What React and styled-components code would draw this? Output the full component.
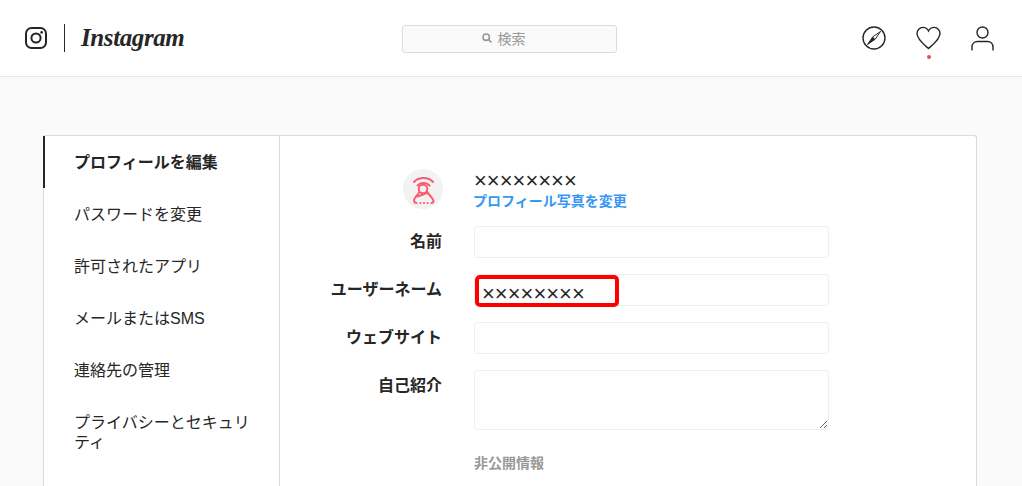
import React from 'react'
import styled, { createGlobalStyle } from 'styled-components'

const Global = createGlobalStyle`
  html, body {
    margin: 0;
    height: 100%;
    overflow: hidden;
    background: #fafafa;
    color: #262626;
    font-family: "Liberation Sans", "Noto Sans CJK JP", sans-serif;
  }
  * { box-sizing: border-box; }
`

const Header = styled.header`
  display: grid;
  grid-template-columns: 1fr 215px 1fr;
  align-items: center;
  height: 77px;
  padding: 0 28px 0 25px;
  background: #fff;
  border-bottom: 1px solid #e6e6e6;
`

const Brand = styled.div`
  display: flex;
  align-items: center;
`

const Divider = styled.span`
  width: 1px;
  height: 28px;
  margin: 0 16px 0 17px;
  background: #262626;
`

const Wordmark = styled.span`
  font-family: "Liberation Serif", serif;
  font-style: italic;
  font-weight: 700;
  font-size: 25px;
  letter-spacing: -0.4px;
  color: #262626;
`

const Search = styled.div`
  display: flex;
  align-items: center;
  justify-content: center;
  gap: 6px;
  height: 28px;
  margin-top: 2px;
  padding: 0 12px 2px 0;
  background: #fafafa;
  border: 1px solid #dbdbdb;
  border-radius: 3px;
  color: #999;
  font-size: 14px;
`

const Nav = styled.nav`
  display: flex;
  justify-content: flex-end;
  align-items: center;
  gap: 30px;
`

const NavIcon = styled.span`
  position: relative;
  display: flex;
`

const Dot = styled.span`
  position: absolute;
  left: 50%;
  bottom: -9px;
  width: 4px;
  height: 4px;
  margin-left: -2px;
  border-radius: 50%;
  background: #ed4956;
`

const Card = styled.main`
  display: grid;
  grid-template-columns: 236px 1fr;
  width: 934px;
  height: 351px;
  margin: 58px 0 0 43px;
  background: #fff;
  border: 1px solid #dbdbdb;
  border-bottom: none;
  border-radius: 3px 3px 0 0;
`

const Sidebar = styled.ul`
  margin: 0;
  padding: 0;
  list-style: none;
  border-right: 1px solid #dbdbdb;
`

const SideItem = styled.li`
  padding: 17px 16px 15px 29px;
  margin-left: -1px;
  border-left: 2px solid ${p => (p.$active ? '#262626' : 'transparent')};
  font-size: 16px;
  line-height: 20px;
  font-weight: ${p => (p.$active ? 700 : 400)};
  color: #262626;
`

const Form = styled.section`
  padding: 33px 0 0;
`

const Row = styled.div`
  display: grid;
  grid-template-columns: 162px 355px;
  column-gap: 32px;
  margin-bottom: 16px;
`

const Label = styled.label`
  font-size: 16px;
  font-weight: 700;
  line-height: 32px;
  text-align: right;
  color: #262626;
`

const Avatar = styled.div`
  justify-self: end;
  width: 40px;
  height: 40px;
  margin-right: -1px;
  border-radius: 50%;
  background: #f2f2f2;
`

const NameBlock = styled.div`
  display: flex;
  flex-direction: column;
  padding-top: 2px;
`

const UserName = styled.span`
  font-size: 22px;
  line-height: 20px;
  height: 21px;
  color: #262626;
`

const ChangeLink = styled.a`
  margin-left: -1px;
  font-size: 14px;
  line-height: 18px;
  font-weight: 700;
  color: #3897f0;
`

const FieldWrap = styled.div`
  position: relative;
`

const Input = styled.input`
  display: block;
  width: 100%;
  height: 32px;
  padding: 7px 7px 0;
  background: #fff;
  border: 1px solid #efefef;
  border-radius: 3px;
  outline: none;
  color: #262626;
  font-family: inherit;
  font-size: 22px;
`

const TextArea = styled.textarea`
  display: block;
  width: 100%;
  height: 60px;
  padding: 6px 10px;
  background: #fff;
  border: 1px solid #efefef;
  border-radius: 3px;
  outline: none;
`

const Highlight = styled.span`
  position: absolute;
  left: 1px;
  top: 1px;
  width: 144px;
  height: 32px;
  border: 4px solid #ff0000;
  border-radius: 5px;
  pointer-events: none;
`

const SectionTitle = styled.h2`
  grid-column: 2;
  margin: 8px 0 0;
  font-size: 14px;
  line-height: 18px;
  font-weight: 700;
  color: #999;
`

const stroke = { fill: 'none', stroke: '#262626' }

export default function App() {
  return (
    <>
      <Global />
      <Header>
        <Brand>
          <svg width="22" height="22" viewBox="0 0 22 22">
            <rect x="1" y="1" width="20" height="20" rx="5.5" {...stroke} strokeWidth="2" />
            <circle cx="11" cy="11" r="4.6" {...stroke} strokeWidth="2" />
            <circle cx="16.6" cy="5.4" r="1.3" fill="#262626" />
          </svg>
          <Divider />
          <Wordmark>Instagram</Wordmark>
        </Brand>
        <Search>
          <svg width="10" height="10" viewBox="0 0 10 10">
            <circle cx="4.2" cy="4.2" r="3.2" fill="none" stroke="#999" strokeWidth="1.6" />
            <path d="M6.6 6.6 9.4 9.4" stroke="#999" strokeWidth="1.6" />
          </svg>
          検索
        </Search>
        <Nav>
          <NavIcon>
            <svg width="24" height="24" viewBox="0 0 24 24">
              <circle cx="12" cy="12" r="11" {...stroke} strokeWidth="1.4" />
              <path d="M18.500 5.500 13.200 13.200 5.500 18.500 10.800 10.800Z" {...stroke} strokeWidth="1" />
              <path d="M5.500 18.500 10.800 10.800 13.200 13.200Z" fill="#262626" />
            </svg>
          </NavIcon>
          <NavIcon>
            <svg width="25" height="24" viewBox="0 0 25 24">
              <path
                d="M12.5 22.5C9 19.4 1 13.6 1 7.6 1 4 3.7 1.4 6.9 1.4c2.5 0 4.5 1.4 5.600 3.600 1.100-2.200 3.100-3.600 5.600-3.600C21.300 1.400 24 4 24 7.600c0 6-8 11.800-11.500 14.900Z"
                {...stroke}
                strokeWidth="1.4"
              />
            </svg>
            <Dot />
          </NavIcon>
          <NavIcon>
            <svg width="23" height="25" viewBox="0 0 23 25">
              <circle cx="11.500" cy="6.500" r="5.500" {...stroke} strokeWidth="1.4" />
              <path d="M1 24.500V21c0-3.300 2.400-5.500 5.500-5.500h10c3.100 0 5.500 2.200 5.500 5.500v3.500" {...stroke} strokeWidth="1.400" />
            </svg>
          </NavIcon>
        </Nav>
      </Header>
      <Card>
        <Sidebar>
          <SideItem $active>プロフィールを編集</SideItem>
          <SideItem>パスワードを変更</SideItem>
          <SideItem>許可されたアプリ</SideItem>
          <SideItem>メールまたはSMS</SideItem>
          <SideItem>連絡先の管理</SideItem>
          <SideItem>プライバシーとセキュリティ</SideItem>
        </Sidebar>
        <Form>
          <Row>
            <Avatar>
              <svg width="40" height="40" viewBox="0 0 40 40" fill="none" stroke="#fb5b72" strokeWidth="2" strokeLinecap="round">
                <path d="M11 13C15.500 7.500 25.500 7.500 30 13" />
                <path d="M14.500 16.500C17.500 13 23.500 13 26.500 16.500" />
                <circle cx="20" cy="20" r="4.300" />
                <path d="M16.500 23 12.500 28C10.500 30.500 10.500 34 13.500 34" />
                <path d="M23.500 22.500 29 29C31 31.500 31 34 28.500 34" />
                <path d="M14 27.500C18 26.500 21.500 25 24.500 23.500" />
                <path d="M17.500 34h.1M21 34h.1M24.500 34h.1" />
              </svg>
            </Avatar>
            <NameBlock>
              <UserName>××××××××</UserName>
              <ChangeLink>プロフィール写真を変更</ChangeLink>
            </NameBlock>
          </Row>
          <Row>
            <Label>名前</Label>
            <Input />
          </Row>
          <Row>
            <Label>ユーザーネーム</Label>
            <FieldWrap>
              <Input defaultValue="××××××××" />
              <Highlight />
            </FieldWrap>
          </Row>
          <Row>
            <Label>ウェブサイト</Label>
            <Input />
          </Row>
          <Row>
            <Label>自己紹介</Label>
            <TextArea />
          </Row>
          <Row>
            <SectionTitle>非公開情報</SectionTitle>
          </Row>
        </Form>
      </Card>
    </>
  )
}
